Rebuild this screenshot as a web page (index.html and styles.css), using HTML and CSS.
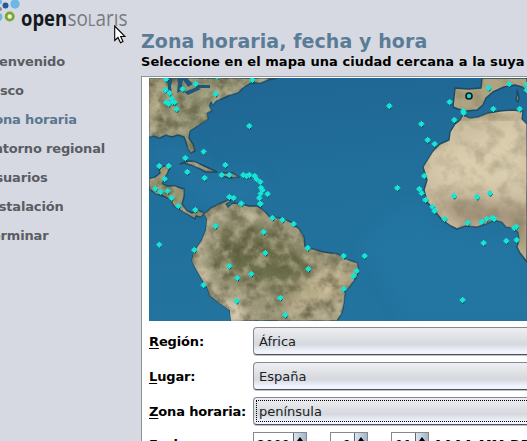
FILE: index.html
```html
<!DOCTYPE html>
<html lang="es">
<head>
<meta charset="utf-8">
<title>Zona horaria, fecha y hora</title>
<link rel="stylesheet" href="styles.css">
</head>
<body>
<div class="installer">
  <aside class="sidebar">
    <svg class="logo" width="141" height="47" viewBox="0 0 141 47" role="img" aria-label="opensolaris">
      <circle cx="15" cy="4" r="4.7" fill="#6eb7e3"/><circle cx="5.5" cy="5.5" r="3" fill="#24599a"/>
      <circle cx="0" cy="2" r="2.2" fill="#6eb7e3"/><circle cx="0" cy="9" r="2" fill="#8a8d91"/><circle cx="-2" cy="17" r="4.5" fill="#6eb7e3"/>
      <circle cx="9.7" cy="16.5" r="3.6" fill="#eef3e8" stroke="#7aa72f" stroke-width="2.7"/>
      <text class="logo-open" x="21" y="26" textLength="46" lengthAdjust="spacingAndGlyphs">open</text>
      <text class="logo-solaris" x="67.5" y="26" textLength="60" lengthAdjust="spacingAndGlyphs">so<tspan class="small-l">L</tspan>arıs</text>
    </svg>
    <ol class="steps">
      <li>Bienvenido</li>
      <li>Disco</li>
      <li class="current">Zona horaria</li>
      <li>Entorno regional</li>
      <li>Usuarios</li>
      <li>Instalación</li>
      <li>Terminar</li>
    </ol>
  </aside>
  <main class="content">
    <h1>Zona horaria, fecha y hora</h1>
    <p class="hint">Seleccione en el mapa una ciudad cercana a la suya</p>
    <section class="panel">
      <svg class="map" width="378" height="243" viewBox="149 78 378 243">
        <defs>
          <linearGradient id="sea" x1="0" y1="0" x2=".15" y2="1">
            <stop offset="0" stop-color="#1f6593"/><stop offset=".5" stop-color="#21709c"/><stop offset="1" stop-color="#22739e"/>
          </linearGradient>
          <filter id="grain" x="0" y="0" width="1" height="1" color-interpolation-filters="sRGB">
            <feTurbulence type="fractalNoise" baseFrequency=".07" numOctaves="4" seed="7"/>
            <feColorMatrix values="0 0 0 0 .33  0 0 0 0 .32  0 0 0 0 .22  2.4 0 0 0 -1.02"/>
          </filter>
          <filter id="light" x="0" y="0" width="1" height="1" color-interpolation-filters="sRGB">
            <feTurbulence type="fractalNoise" baseFrequency=".09" numOctaves="4" seed="21"/>
            <feColorMatrix values="0 0 0 0 .86  0 0 0 0 .82  0 0 0 0 .7  2.4 0 0 0 -1.02"/>
          </filter>
          <filter id="soft" x="-30%" y="-30%" width="160%" height="160%"><feGaussianBlur stdDeviation="8"/></filter>
          <filter id="soft2" x="-30%" y="-30%" width="160%" height="160%"><feGaussianBlur stdDeviation="3"/></filter>
          <path id="namerica" d="M149 78H277L268 80 261 83 251 83 243 88 238 93 230 95 224 98 216 101 213 105 211 102 209 106 212 111 207 113 208 119 202 123 196 127 190 131 189 138 193 144 195 151 191 153 188 149 186 142 184 137 178 135 172 137 166 135 160 138 153 136 149 137Z"/>
          <path id="camerica" d="M149 179L155 177 160 173 159 168 164 166 170 166 168 172 165 177 162 184 168 186 175 186 184 189 184 197 182 204 186 210 192 213 198 210 204 213 201 217 196 216 195 219 187 214 180 210 174 206 170 199 163 196 156 194 149 189Z"/>
          <path id="samerica" d="M204 214L211 208 219 204 228 200 231 201 226 204 228 207 233 203 242 204 249 206 257 206 264 211 270 217 281 218 291 222 299 229 304 237 305 247 313 249 324 252 338 254 345 259 352 261 357 263 359 271 356 278 350 286 345 292 344 302 342 313 337 321H231L230 310 218 302 210 296 207 287 201 278 196 269 192 261 194 252 202 240 206 230 207 219Z"/>
          <path id="europe" d="M482 78L481 88 468 89 455 88 454 97 453 107 458 109 466 111 477 110 483 105 486 98 493 92 504 87 515 85 522 87 527 91V78Z"/>
          <path id="africa" d="M463 115L470 118 478 117 488 113 500 111 512 110 523 111 522 119 527 124V262L520 253 517 247 519 239 518 232 512 228 506 227 502 222 494 220 486 224 477 227 465 226 457 229 451 226 442 220 434 210 427 202 424 190 427 180 423 167 428 159 433 151 440 144 449 140 450 132 455 124 460 120Z"/>
          <path id="islands" d="M180 164Q190 158 200 164L213 170 217 172 206 172 194 166 184 163ZM221 173L233 173 239 177 230 178 222 176ZM517 90L519 97 518 102 516 100 517 95Z"/>
          <clipPath id="land"><use href="#namerica"/><use href="#camerica"/><use href="#samerica"/><use href="#europe"/><use href="#africa"/><use href="#islands"/></clipPath>
          <g id="city"><path d="M0-6L9 2 2 11-6 4Z" fill="#0b3538"/><path d="M-2-9H2V-6H6V-2H9V2H6V6H2V9H-2V6H-6V2H-9V-2H-6V-6H-2Z" fill="#16e5d5"/></g>
        </defs>
        <rect x="149" y="78" width="378" height="243" fill="url(#sea)"/>
        <path d="M149 139H190L210 170 260 175 267 205 205 208 185 190 170 162 149 178ZM410 200L440 230 510 235 527 260V321H410L360 245Z" fill="#287ca8" opacity=".4" filter="url(#soft)"/>
        <g stroke="#1b4a62" stroke-width="1.4" stroke-linejoin="round">
          <use href="#namerica" fill="#929273"/><use href="#camerica" fill="#94916e"/><use href="#samerica" fill="#9c977a"/>
          <use href="#europe" fill="#aea483"/><use href="#africa" fill="#cdbfa1"/><use href="#islands" fill="#9a977c"/>
        </g>
        <g clip-path="url(#land)">
          <g filter="url(#soft)">
            <path d="M145 75H165V125H145Z" fill="#b0a784"/><ellipse cx="197" cy="116" rx="22" ry="9" fill="#808163"/>
            <path d="M215 230L265 225 320 265 290 295 240 280 215 262Z" fill="#6d6e4c"/>
            <path d="M310 275L355 260 345 300 300 321 280 310Z" fill="#b9ac89"/>
            <path d="M430 197L527 207V225L460 225Z" fill="#a09078"/><path d="M510 225H527V265Z" fill="#7a7856"/>
            <path d="M430 160L520 120 527 190 440 185Z" fill="#dacdae"/>
          </g>
          <path d="M208 215L202 240 194 260 206 283 220 297 237 321" fill="none" stroke="#bdb398" stroke-width="10" filter="url(#soft2)"/>
          <path d="M216 298L239 301 249 321H229Z" fill="#cdc2a8" filter="url(#soft2)"/>
          <path d="M240 214H265M280 228L290 236" stroke="#aaa486" stroke-width="7" filter="url(#soft2)"/>
          <path d="M460 118L485 115 513 119" fill="none" stroke="#998b69" stroke-width="4" filter="url(#soft2)"/>
          <rect x="149" y="78" width="273" height="243" filter="url(#grain)" opacity=".75"/>
          <rect x="149" y="78" width="273" height="243" filter="url(#light)" opacity=".5"/>
          <rect x="420" y="78" width="107" height="243" filter="url(#grain)" opacity=".25"/>
        </g>
        <path d="M167 78H173L171 86 172 94 169 96 168 89ZM177 78H187L193 84 188 87 183 80 181 91 177 93 178 84ZM184 92L197 87 201 89 188 95ZM196 85H210V88H198Z" fill="#205779"/>
        <g transform="translate(140 70) scale(.33333)">
          <use href="#city" x="78" y="28"/><use href="#city" x="232" y="20"/><use href="#city" x="76" y="60"/><use href="#city" x="89" y="69"/><use href="#city" x="128" y="57"/><use href="#city" x="167" y="42"/><use href="#city" x="337" y="30"/><use href="#city" x="227" y="72"/><use href="#city" x="95" y="86"/><use href="#city" x="78" y="97"/><use href="#city" x="86" y="102"/><use href="#city" x="97" y="97"/><use href="#city" x="104" y="97"/><use href="#city" x="110" y="118"/><use href="#city" x="328" y="168"/><use href="#city" x="191" y="245"/><use href="#city" x="136" y="264"/><use href="#city" x="58" y="288"/><use href="#city" x="86" y="288"/><use href="#city" x="256" y="285"/><use href="#city" x="142" y="306"/><use href="#city" x="194" y="324"/><use href="#city" x="74" y="327"/><use href="#city" x="245" y="315"/><use href="#city" x="268" y="315"/><use href="#city" x="310" y="315"/><use href="#city" x="320" y="319"/><use href="#city" x="328" y="315"/><use href="#city" x="344" y="318"/><use href="#city" x="350" y="328"/><use href="#city" x="361" y="336"/><use href="#city" x="363" y="353"/><use href="#city" x="368" y="361"/><use href="#city" x="362" y="371"/><use href="#city" x="383" y="372"/><use href="#city" x="358" y="384"/><use href="#city" x="361" y="401"/><use href="#city" x="46" y="356"/><use href="#city" x="62" y="366"/><use href="#city" x="83" y="363"/><use href="#city" x="95" y="384"/><use href="#city" x="268" y="381"/><use href="#city" x="281" y="384"/><use href="#city" x="304" y="401"/>
        </g>
        <g transform="translate(330 70) scale(.33333)">
          <use href="#city" x="178" y="108"/><use href="#city" x="274" y="162"/><use href="#city" x="359" y="96"/><use href="#city" x="476" y="54"/><use href="#city" x="538" y="42"/><use href="#city" x="589" y="44"/><use href="#city" x="590" y="60"/><use href="#city" x="400" y="123"/><use href="#city" x="401" y="129"/><use href="#city" x="373" y="150"/><use href="#city" x="490" y="117"/><use href="#city" x="569" y="117"/><use href="#city" x="293" y="210"/><use href="#city" x="314" y="222"/><use href="#city" x="283" y="318"/><use href="#city" x="202" y="354"/><use href="#city" x="268" y="357"/><use href="#city" x="275" y="370"/><use href="#city" x="287" y="390"/><use href="#city" x="372" y="378"/><use href="#city" x="441" y="381"/><use href="#city" x="480" y="370"/>
          <circle cx="417" cy="78" r="9" fill="#16d9cd" stroke="#101c1f" stroke-width="5"/>
        </g>
        <g transform="translate(140 200) scale(.33333)">
          <use href="#city" x="115" y="18"/><use href="#city" x="166" y="30"/><use href="#city" x="304" y="11"/><use href="#city" x="361" y="12"/><use href="#city" x="397" y="54"/><use href="#city" x="427" y="60"/><use href="#city" x="461" y="72"/><use href="#city" x="227" y="78"/><use href="#city" x="371" y="96"/><use href="#city" x="58" y="134"/><use href="#city" x="163" y="150"/><use href="#city" x="376" y="159"/><use href="#city" x="503" y="144"/><use href="#city" x="268" y="198"/><use href="#city" x="334" y="222"/><use href="#city" x="292" y="234"/><use href="#city" x="505" y="207"/><use href="#city" x="191" y="255"/><use href="#city" x="421" y="294"/><use href="#city" x="290" y="303"/><use href="#city" x="436" y="345"/>
        </g>
        <g transform="translate(330 200) scale(.33333)">
          <use href="#city" x="287" y="0"/><use href="#city" x="307" y="20"/><use href="#city" x="314" y="33"/><use href="#city" x="344" y="57"/><use href="#city" x="413" y="69"/><use href="#city" x="455" y="66"/><use href="#city" x="470" y="57"/><use href="#city" x="487" y="54"/><use href="#city" x="493" y="57"/><use href="#city" x="553" y="84"/><use href="#city" x="559" y="80"/><use href="#city" x="560" y="120"/><use href="#city" x="529" y="123"/><use href="#city" x="461" y="129"/><use href="#city" x="41" y="168"/><use href="#city" x="104" y="168"/><use href="#city" x="80" y="213"/><use href="#city" x="71" y="228"/><use href="#city" x="41" y="267"/><use href="#city" x="398" y="300"/>
        </g>
      </svg>
      <div class="form">
        <div class="row"><span class="label"><u>R</u>egión:</span><div class="combo">África</div></div>
        <div class="row"><span class="label"><u>L</u>ugar:</span><div class="combo">España</div></div>
        <div class="row"><span class="label"><u>Z</u>ona horaria:</span><div class="combo focused">península</div></div>
        <div class="row date">
          <span class="label">Fecha:</span>
          <div class="spin year"><span>2009</span><i></i></div>
          <div class="spin"><span>9</span><i></i></div>
          <div class="spin"><span>11</span><i></i></div>
          <span class="format">AAAA-MM-DD</span>
        </div>
      </div>
    </section>
  </main>
</div>
<svg class="pointer" width="12" height="19" viewBox="0 0 12 19"><path d="M.7 1V15.5L4 12.5 6.5 17.8 9 16.6 6.7 11.5H11Z" fill="#fff" stroke="#000" stroke-width="1.1"/></svg>
</body>
</html>
```
FILE: styles.css
```css
* { box-sizing: border-box; }
body {
  margin: 0;
  width: 527px;
  height: 441px;
  overflow: hidden;
  background: #d6d9e1;
  font: 13px/16px "DejaVu Sans", sans-serif;
  color: #000;
}
.installer { display: flex; height: 441px; overflow: hidden; }
.sidebar { flex: 0 0 141px; overflow: hidden; }
.logo { display: block; }
.logo-open { font: 700 22px "Open Sans", sans-serif; fill: #15181b; }
.logo-solaris { font: 400 22px "Open Sans", sans-serif; fill: #777b80; }
.small-l { font-size: 17px; }
.steps {
  list-style: none;
  margin: 0 0 0 -15px;
  padding: 0;
  font-weight: bold;
  line-height: 29px;
  letter-spacing: -.17px;
  color: #5a5d62;
}
.steps li { white-space: nowrap; }
.steps .current { color: #59778f; }
.content { flex: 0 0 500px; padding-top: 29px; }
h1 {
  margin: 0;
  font-size: 19px;
  line-height: 24px;
  letter-spacing: .08px;
  color: #5b7c97;
  white-space: nowrap;
}
.hint { margin: 0; font-weight: bold; line-height: 17px; letter-spacing: .06px; white-space: nowrap; }
.panel {
  margin-top: 6px;
  height: 400px;
  padding: 1px 0 0 7px;
  background: #fff;
  border: 1px solid #8d929c;
}
.map { display: block; }
.form { display: flex; flex-direction: column; gap: 7px; padding-top: 6px; }
.row { display: flex; align-items: center; height: 28px; }
.label { flex: 0 0 104px; padding-top: 2px; font-weight: bold; letter-spacing: -.15px; white-space: nowrap; }
.label u { text-underline-offset: 2px; }
.combo {
  flex: 1;
  height: 28px;
  padding: 0 5px;
  line-height: 27px;
  border: 1px solid #858992;
  border-bottom: 1px solid #50535b;
  border-radius: 4px;
  background: linear-gradient(#eeeff2, #d5d8dd 62%, #f0f4fc 90%);
  box-shadow: 0 1px 0 #bfc2c6;
  color: #202124;
}
.focused { position: relative; }
.focused::after { content: ""; position: absolute; inset: 2px; border: 1px dotted #000; }
.date { align-items: flex-start; }
.date .label { padding-top: 5px; }
.spin {
  display: flex;
  width: 38px;
  height: 24px;
  margin-right: 23px;
  border: 1px solid #85898f;
  background: #fff;
}
.spin.year { width: 54px; }
.spin span { flex: 1; padding: 4px 3px 0 0; text-align: right; }
.spin i {
  width: 13px;
  padding: 4px 0 0 3px;
  border-left: 1px solid #56677c;
  background: linear-gradient(90deg, #d9e5ef, #a3b5c7);
}
.spin i::before { content: ""; display: block; width: 0; border: solid transparent; border-width: 0 3px 4px; border-bottom-color: #000; }
.format { margin-left: -19px; padding-top: 5px; font-weight: bold; }
.pointer { position: absolute; left: 114px; top: 25px; }
```
